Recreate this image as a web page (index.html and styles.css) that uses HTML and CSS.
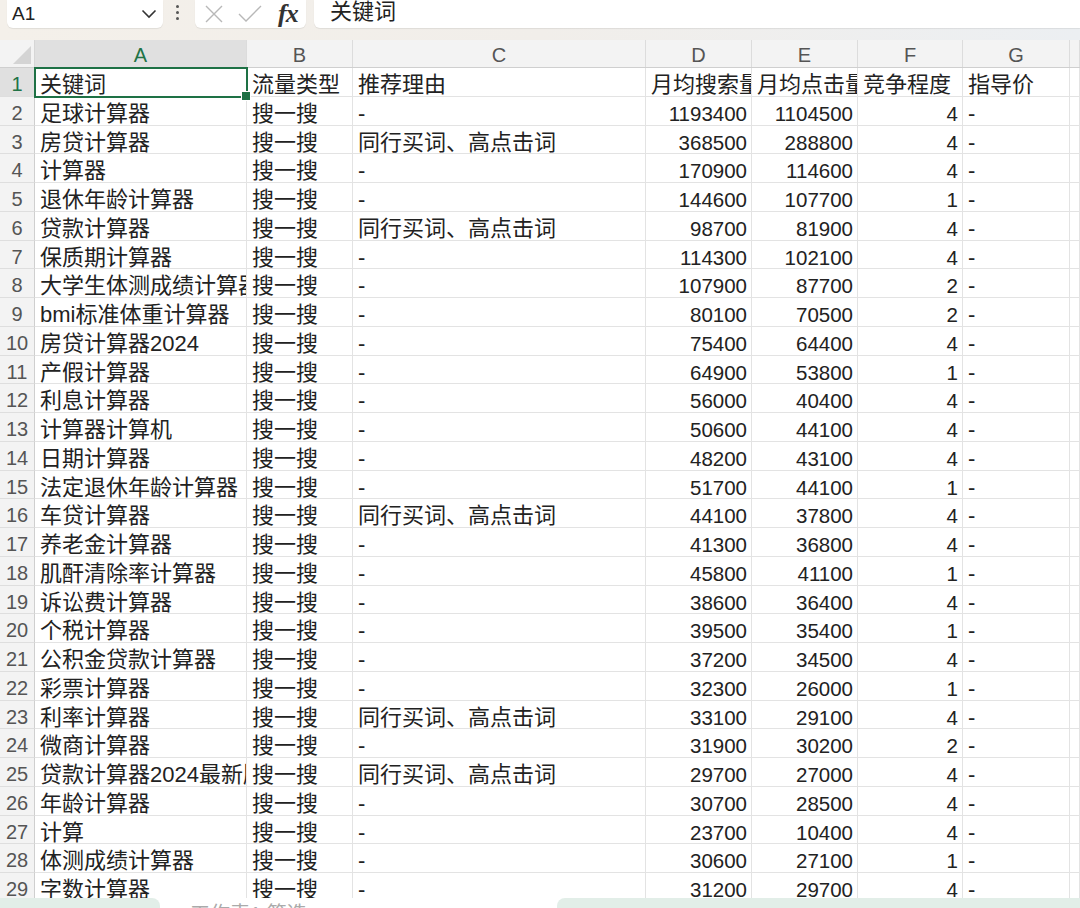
FILE: index.html
```html
<!DOCTYPE html>
<html>
<head>
  <title>关键词 - 工作表</title>
  <meta charset='utf-8'>
  <link rel="stylesheet" href="styles.css">
</head>
<body>

  <header class="topbar">
    <div class="namebox">
      <span>A1</span>
      <svg class="chevron" width="16" height="10" viewBox="0 0 16 10"><path d="M1.5 1.5 L8 8 L14.5 1.5" fill="none" stroke="#333" stroke-width="1.6"/></svg>
    </div>
    <div class="dots"><i></i><i></i><i></i></div>
    <div class="fxbox">
      <svg width="20" height="20" viewBox="0 0 20 20"><path d="M2 2 L18 18 M18 2 L2 18" stroke="#b8b8b8" stroke-width="1.4" fill="none"/></svg>
      <svg width="24" height="18" viewBox="0 0 24 18"><path d="M1 9 L8 16 L23 1" stroke="#b8b8b8" stroke-width="1.4" fill="none"/></svg>
      <i class="fx">fx</i>
    </div>
    <div class="formula">关键词</div>
  </header>

  <main class="sheet" id="sheet">
    <div class="row colheads">
      <div class="corner"></div>
      <div class="ch active">A</div>
      <div class="ch">B</div>
      <div class="ch">C</div>
      <div class="ch">D</div>
      <div class="ch">E</div>
      <div class="ch">F</div>
      <div class="ch">G</div>
      <div class="ch"></div>
    </div>
  </main>

  <footer class="tabs">
    <div class="tab-left"></div>
    <div class="tab-mid">工作表1 筛选</div>
    <div class="tab-right"></div>
  </footer>

<script type="text/javascript">
  (function(){
    var rows = [
      ['关键词', '流量类型', '推荐理由', '月均搜索量', '月均点击量', '竞争程度', '指导价'],
      ['足球计算器', '搜一搜', '-', 1193400, 1104500, 4, '-'],
      ['房贷计算器', '搜一搜', '同行买词、高点击词', 368500, 288800, 4, '-'],
      ['计算器', '搜一搜', '-', 170900, 114600, 4, '-'],
      ['退休年龄计算器', '搜一搜', '-', 144600, 107700, 1, '-'],
      ['贷款计算器', '搜一搜', '同行买词、高点击词', 98700, 81900, 4, '-'],
      ['保质期计算器', '搜一搜', '-', 114300, 102100, 4, '-'],
      ['大学生体测成绩计算器', '搜一搜', '-', 107900, 87700, 2, '-'],
      ['bmi标准体重计算器', '搜一搜', '-', 80100, 70500, 2, '-'],
      ['房贷计算器2024', '搜一搜', '-', 75400, 64400, 4, '-'],
      ['产假计算器', '搜一搜', '-', 64900, 53800, 1, '-'],
      ['利息计算器', '搜一搜', '-', 56000, 40400, 4, '-'],
      ['计算器计算机', '搜一搜', '-', 50600, 44100, 4, '-'],
      ['日期计算器', '搜一搜', '-', 48200, 43100, 4, '-'],
      ['法定退休年龄计算器', '搜一搜', '-', 51700, 44100, 1, '-'],
      ['车贷计算器', '搜一搜', '同行买词、高点击词', 44100, 37800, 4, '-'],
      ['养老金计算器', '搜一搜', '-', 41300, 36800, 4, '-'],
      ['肌酐清除率计算器', '搜一搜', '-', 45800, 41100, 1, '-'],
      ['诉讼费计算器', '搜一搜', '-', 38600, 36400, 4, '-'],
      ['个税计算器', '搜一搜', '-', 39500, 35400, 1, '-'],
      ['公积金贷款计算器', '搜一搜', '-', 37200, 34500, 4, '-'],
      ['彩票计算器', '搜一搜', '-', 32300, 26000, 1, '-'],
      ['利率计算器', '搜一搜', '同行买词、高点击词', 33100, 29100, 4, '-'],
      ['微商计算器', '搜一搜', '-', 31900, 30200, 2, '-'],
      ['贷款计算器2024最新版', '搜一搜', '同行买词、高点击词', 29700, 27000, 4, '-'],
      ['年龄计算器', '搜一搜', '-', 30700, 28500, 4, '-'],
      ['计算', '搜一搜', '-', 23700, 10400, 4, '-'],
      ['体测成绩计算器', '搜一搜', '-', 30600, 27100, 1, '-'],
      ['字数计算器', '搜一搜', '-', 31200, 29700, 4, '-']
    ];

    var sheet = document.querySelector('#sheet');

    rows.forEach(function(cells, i){
      var row = document.createElement('div');
      row.className = 'row';

      var head = document.createElement('div');
      head.className = 'rh' + (i === 0 ? ' active' : '');
      head.textContent = i + 1;
      row.appendChild(head);

      cells.forEach(function(value, j){
        var cell = document.createElement('div');
        cell.className = 'cell' + (typeof value === 'number' ? ' num' : '');
        if (i === 0 && j === 0) cell.className += ' selected';
        cell.textContent = value;
        row.appendChild(cell);
      });

      // empty column H
      var extra = document.createElement('div');
      extra.className = 'cell';
      row.appendChild(extra);

      sheet.appendChild(row);
    });
  })();
</script>

</body>
</html>
```

FILE: styles.css
```css
* {
  box-sizing: border-box;
}
html, body {
  height: 100%;
}
body {
  background: white;
  color: #222;
  display: flex;
  flex-direction: column;
  font-family: "Liberation Sans", "Noto Sans CJK SC", sans-serif;
  height: 908px;
  margin: 0;
  overflow: hidden;
}

/* formula bar */
.topbar {
  align-items: flex-start;
  background: linear-gradient(to right, #f4f0ea, #f1eeea 50%, #eceff2);
  display: flex;
  flex: 0 0 40px;
  height: 40px;
}
.namebox {
  align-items: center;
  background: white;
  border-radius: 0 0 6px 6px;
  box-shadow: 0 1px 1px rgba(0,0,0,.08);
  display: flex;
  font-size: 19px;
  height: 28px;
  justify-content: space-between;
  margin-left: 7px;
  padding: 0 6px 0 5px;
  width: 156px;
}
.dots {
  display: flex;
  flex-direction: column;
  gap: 3px;
  margin: 5px 0 0 13px;
  width: 4px;
}
.dots i {
  background: #555;
  border-radius: 50%;
  display: block;
  height: 3px;
  width: 3px;
}
.fxbox {
  align-items: center;
  background: white;
  border-radius: 0 0 6px 6px;
  box-shadow: 0 1px 1px rgba(0,0,0,.08);
  display: flex;
  gap: 14px;
  height: 28px;
  margin-left: 15px;
  padding: 0 0 0 9px;
  width: 111px;
}
.fx {
  color: #333;
  font-family: "Liberation Serif", serif;
  font-size: 26px;
  font-weight: bold;
  letter-spacing: -1px;
  line-height: 1;
  margin-left: 2px;
}
.formula {
  background: white;
  border-radius: 0 0 0 6px;
  box-shadow: 0 1px 1px rgba(0,0,0,.08);
  flex: 1;
  font-size: 22px;
  height: 28px;
  line-height: 24px;
  margin-left: 8px;
  padding-left: 16px;
}

/* grid */
.sheet {
  flex: 1;
  overflow: hidden;
}
.row {
  display: grid;
  grid-template-columns: 35px 212px 106px 293px 106px 106px 105px 107px 1fr;
  grid-template-rows: 100%;
  height: 28.75px;
}
.colheads {
  background: #f3f3f3;
  border-bottom: 1px solid #cfcfcf;
  height: 28px;
}
.corner {
  border-right: 1px solid #d6d6d6;
  position: relative;
}
.corner::after {
  border-bottom: 18px solid #d4d4d4;
  border-left: 18px solid transparent;
  bottom: 3px;
  content: "";
  position: absolute;
  right: 3px;
}
.ch {
  border-right: 1px solid #dcdcdc;
  color: #555;
  font-size: 20px;
  line-height: 31px;
  overflow: hidden;
  text-align: center;
}
.ch.active {
  background: #e0e0e0;
  color: #217346;
}
.rh {
  background: #f3f3f3;
  border-bottom: 1px solid #dedede;
  border-right: 1px solid #cfcfcf;
  color: #555;
  font-size: 20px;
  line-height: 33px;
  overflow: hidden;
  text-align: center;
}
.rh.active {
  background: #e0e0e0;
  color: #217346;
}
.cell {
  border-bottom: 1px solid #e3e3e3;
  border-right: 1px solid #e3e3e3;
  font-size: 22px;
  line-height: 33px;
  overflow: hidden;
  padding: 0 4px 0 5px;
  white-space: nowrap;
}
.cell.num {
  font-size: 20.5px;
  text-align: right;
}
.cell.selected {
  outline: 2px solid #1e7145;
  outline-offset: -1px;
  overflow: visible;
  position: relative;
  z-index: 1;
}
.cell.selected::after {
  background: #1e7145;
  border: 1px solid white;
  bottom: -5px;
  content: "";
  height: 8px;
  position: absolute;
  right: -5px;
  width: 8px;
}

/* sheet tabs strip, cut off at the bottom */
.tabs {
  display: flex;
  flex: 0 0 10px;
  height: 10px;
  overflow: hidden;
}
.tab-left {
  background: #e2eee8;
  border-radius: 0 8px 0 0;
  width: 160px;
}
.tab-mid {
  color: #aaa;
  font-size: 20px;
  line-height: 32px;
  padding-left: 30px;
  width: 397px;
}
.tab-right {
  background: #e2eee8;
  border-radius: 8px 0 0 0;
  flex: 1;
}
```
